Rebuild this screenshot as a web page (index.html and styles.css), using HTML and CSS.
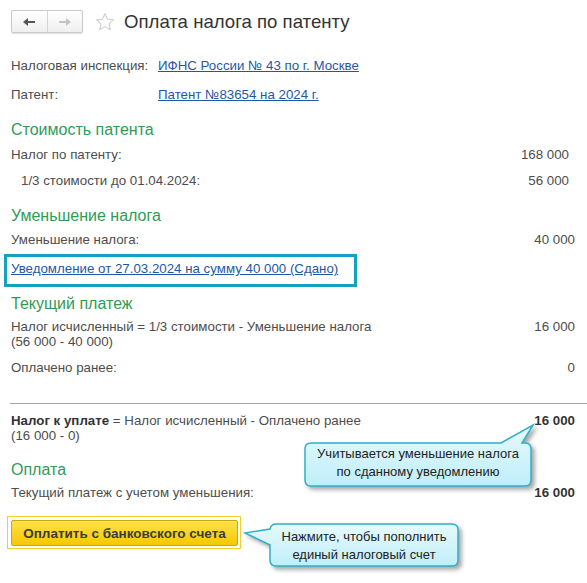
FILE: index.html
```html
<!DOCTYPE html>
<html lang="ru">
<head>
<meta charset="utf-8">
<title>Оплата налога по патенту</title>
<link rel="stylesheet" href="styles.css">
</head>
<body>
<div class="page">
  <div class="header">
    <div class="nav">
      <div class="nav-btn">
        <svg width="14" height="10" viewBox="0 0 14 10"><path d="M1 5 L6 1 V4 H13 V6 H6 V9 Z" fill="#555"/></svg>
      </div>
      <div class="nav-btn">
        <svg width="14" height="10" viewBox="0 0 14 10"><path d="M13 5 L8 1 V4 H1 V6 H8 V9 Z" fill="#c4c4c4"/></svg>
      </div>
    </div>
    <svg class="star" width="20" height="20" viewBox="0 0 20 20"><path d="M10 1.5 L12.5 7.2 L18.6 7.7 L14 11.8 L15.4 17.8 L10 14.6 L4.6 17.8 L6 11.8 L1.4 7.7 L7.5 7.2 Z" fill="none" stroke="#cfcfcf" stroke-width="1.1" stroke-linejoin="round"/></svg>
    <div class="title">Оплата налога по патенту</div>
  </div>

  <div class="content">
    <div class="field r1"><span class="label">Налоговая инспекция:</span><a class="link">ИФНС России № 43 по г. Москве</a></div>
    <div class="field r2"><span class="label">Патент:</span><a class="link">Патент №83654 на 2024 г.</a></div>

    <div class="heading h1">Стоимость патента</div>
    <div class="row r3 inset"><span>Налог по патенту:</span><span>168 000</span></div>
    <div class="row r4 inset"><span class="indent">1/3 стоимости до 01.04.2024:</span><span>56 000</span></div>

    <div class="heading h2">Уменьшение налога</div>
    <div class="row r5"><span>Уменьшение налога:</span><span>40 000</span></div>
    <div class="notice-box"><a class="link">Уведомление от 27.03.2024 на сумму 40 000 (Сдано)</a></div>

    <div class="heading h3">Текущий платеж</div>
    <div class="row two r6"><span>Налог исчисленный = 1/3 стоимости - Уменьшение налога<br>(56 000 - 40 000)</span><span>16 000</span></div>
    <div class="row r7"><span>Оплачено ранее:</span><span>0</span></div>

    <div class="divider"></div>

    <div class="row two r8"><span><b>Налог к уплате</b> = Налог исчисленный - Оплачено ранее<br>(16 000 - 0)</span><b>16 000</b></div>

    <div class="heading h4">Оплата</div>
    <div class="row r9"><span>Текущий платеж с учетом уменьшения:</span><b>16 000</b></div>

    <div class="pay-wrap"><div class="pay-btn">Оплатить с банковского счета</div></div>
  </div>

  <div class="callout callout-1">
    <svg width="250" height="85" viewBox="0 0 250 85">
      <defs>
        <linearGradient id="cg1" x1="0" y1="0" x2="0" y2="1">
          <stop offset="0" stop-color="#e6fafd"/>
          <stop offset="1" stop-color="#bfeef8"/>
        </linearGradient>
      </defs>
      <path d="M16 28 H206 L238 10 L227 28 H230 Q236 28 236 34 V65 Q236 71 230 71 H16 Q10 71 10 65 V34 Q10 28 16 28 Z" fill="url(#cg1)" stroke="#2fb0c9" stroke-width="1.5"/>
    </svg>
    <div class="callout-text">Учитывается уменьшение налога<br>по сданному уведомлению</div>
  </div>

  <div class="callout callout-2">
    <svg width="235" height="60" viewBox="0 0 235 60">
      <defs>
        <linearGradient id="cg2" x1="0" y1="0" x2="0" y2="1">
          <stop offset="0" stop-color="#e6fafd"/>
          <stop offset="1" stop-color="#bfeef8"/>
        </linearGradient>
      </defs>
      <path d="M41 9 H217 Q223 9 223 15 V45 Q223 51 217 51 H41 Q35 51 35 45 V30 L10 18 L35 14 Q36 9 41 9 Z" fill="url(#cg2)" stroke="#2fb0c9" stroke-width="1.5"/>
    </svg>
    <div class="callout-text">Нажмите, чтобы пополнить<br>единый налоговый счет</div>
  </div>
</div>
</body>
</html>
```

FILE: styles.css
```css
html, body {
  margin: 0;
  padding: 0;
  background: #fff;
}

.page {
  position: relative;
  width: 587px;
  height: 583px;
  overflow: hidden;
  font-family: "Liberation Sans", Arial, sans-serif;
  font-size: 13.3px;
  color: #4d4d4d;
}

.header {
  height: 44px;
  display: flex;
  align-items: flex-start;
  padding: 10px 0 0 11px;
  box-sizing: border-box;
}

.nav {
  display: flex;
  width: 72px;
  height: 23px;
  border: 1px solid #cacaca;
  border-radius: 2px;
  box-sizing: border-box;
  background: linear-gradient(#ffffff, #efefef);
  box-shadow: 0 1px 1px rgba(0,0,0,0.12);
}

.nav-btn {
  flex: 1;
  display: flex;
  align-items: center;
  justify-content: center;
}

.nav-btn + .nav-btn {
  border-left: 1px solid #d4d4d4;
}

.star {
  margin: 2px 0 0 12px;
}

.title {
  margin-left: 9px;
  font-size: 18.6px;
  line-height: 24px;
  color: #333;
}

.content {
  padding: 0 12px 0 11px;
}

.field {
  display: flex;
  line-height: 16px;
}

.label {
  width: 147px;
}

.link {
  color: #1f57a8;
  text-decoration: underline;
}

.row {
  display: flex;
  justify-content: space-between;
  line-height: 16px;
}

.row.two {
  line-height: 15px;
}

.inset {
  padding-right: 6px;
}

.indent {
  padding-left: 10px;
}

.heading {
  font-size: 16px;
  line-height: 20px;
  color: #2f9b55;
}

.r1 { margin-top: 14px; }
.r2 { margin-top: 13px; }
.h1 { margin-top: 17px; }
.r3 { margin-top: 7px; }
.r4 { margin-top: 10px; }
.h2 { margin-top: 17px; }
.r5 { margin-top: 6px; }

.notice-box {
  margin: 6px 0 0 -7px;
  width: 353px;
  height: 33px;
  box-sizing: border-box;
  border: 3px solid #13a2bf;
  padding: 4px 0 0 4px;
  line-height: 16px;
}

.h3 { margin-top: 7px; }
.r6 { margin-top: 5px; }
.r7 { margin-top: 11px; }

.divider {
  margin: 27px -12px 0 -1px;
  height: 1px;
  border-top: 1px solid #a6a6a6;
}

.r8 { margin-top: 8px; }
.r8 b, .r9 b { color: #333; }
.h4 { margin-top: 17px; }
.r9 { margin-top: 5px; }

.pay-wrap {
  margin: 15px 0 0 -4px;
  width: 234px;
  height: 33px;
  box-sizing: border-box;
  border: 1px solid #f2cf2a;
  padding: 3px 2px 2px 3px;
}

.pay-btn {
  height: 26px;
  box-sizing: border-box;
  border: 1px solid #c9a800;
  border-radius: 2px;
  background: linear-gradient(#ffe24a, #f7c800);
  display: flex;
  align-items: center;
  justify-content: center;
  font-weight: bold;
  font-size: 13.5px;
  color: #3b3b3b;
}

.callout {
  position: absolute;
}

.callout svg {
  display: block;
  filter: drop-shadow(3px 3px 2px rgba(0,0,0,0.35));
}

.callout-text {
  position: absolute;
  text-align: center;
  font-size: 13px;
  line-height: 18px;
  color: #222;
}

.callout-1 {
  left: 295px;
  top: 415px;
}

.callout-1 .callout-text {
  left: 10px;
  top: 28px;
  width: 226px;
  padding-top: 2px;
}

.callout-2 {
  left: 235px;
  top: 515px;
}

.callout-2 .callout-text {
  left: 35px;
  top: 9px;
  width: 188px;
  padding-top: 4px;
}
```
